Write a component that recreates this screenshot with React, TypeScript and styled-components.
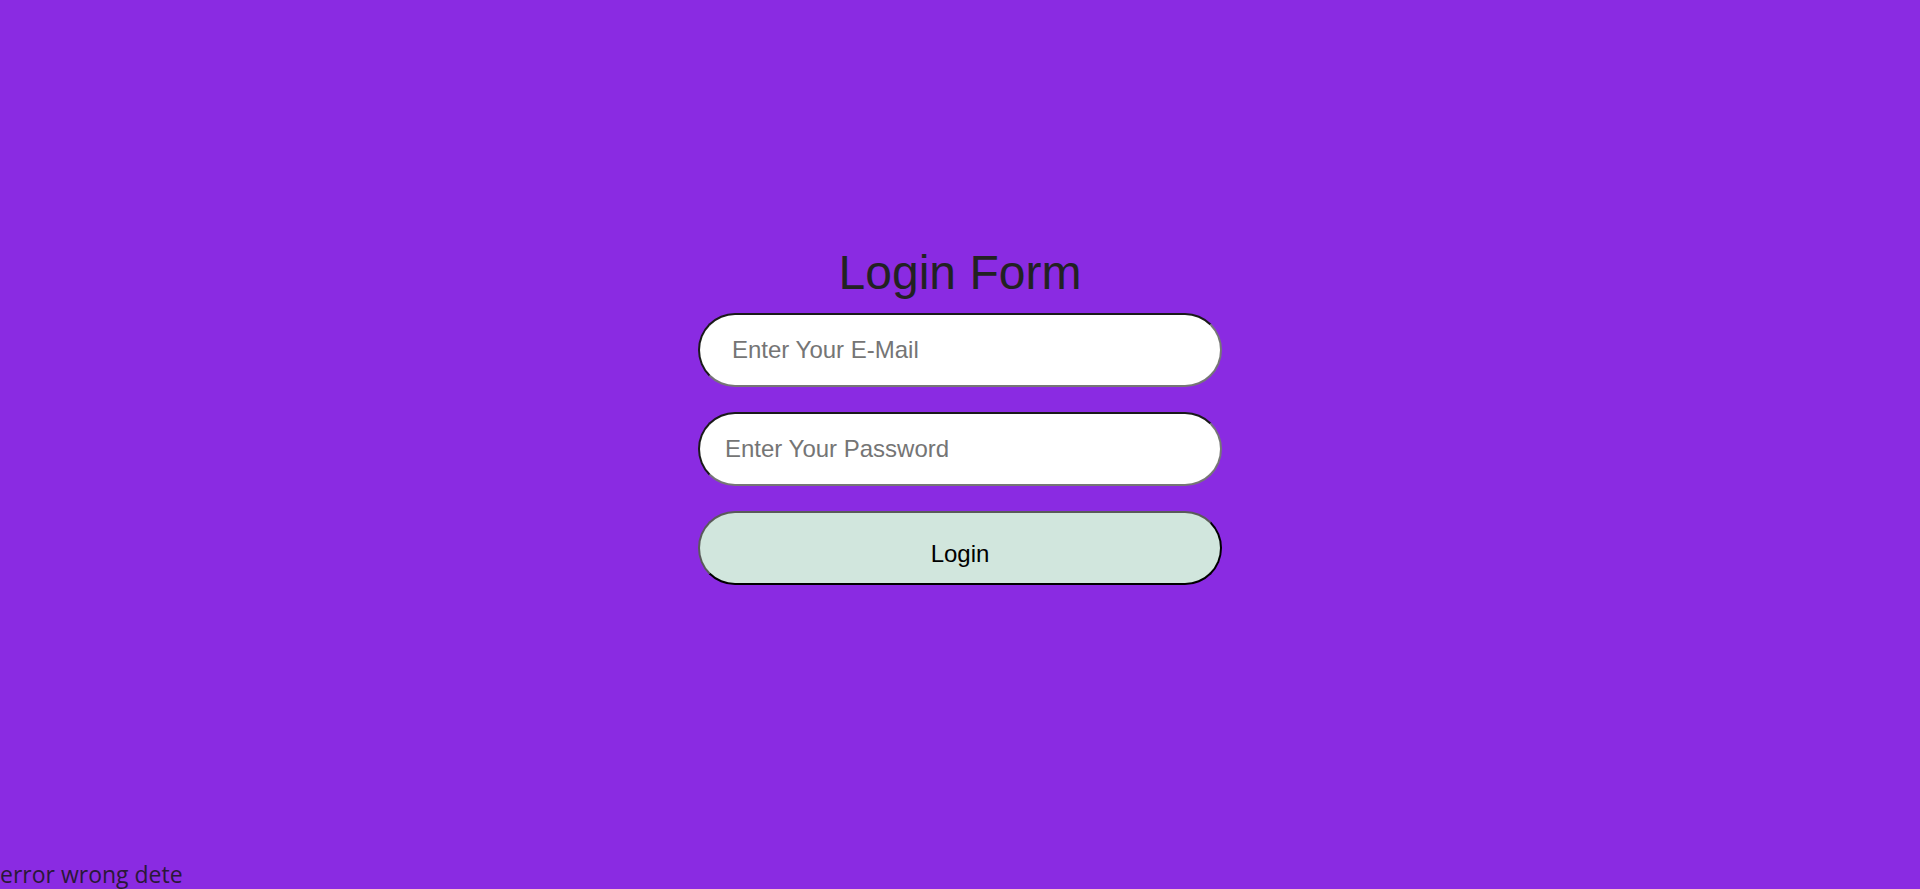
import React from 'react'
import styled, { createGlobalStyle } from 'styled-components'

const GlobalStyle = createGlobalStyle`
  html, body {
    margin: 0;
    padding: 0;
  }
  body {
    background: #8a2be2;
    font-family: "Liberation Sans", Arial, sans-serif;
  }
`

const Page = styled.div`
  min-height: 100vh;
  display: flex;
  flex-direction: column;
`

const Main = styled.main`
  flex: 1;
  display: flex;
  flex-direction: column;
  align-items: center;
  padding-top: 245px;
`

const Title = styled.h1`
  margin: 0 0 13px;
  font-size: 48px;
  font-weight: 400;
  line-height: normal;
  color: #222;
`

const Form = styled.form`
  display: flex;
  flex-direction: column;
  gap: 25px;
  width: 524px;
`

const Field = styled.input<{ $indent: number }>`
  box-sizing: border-box;
  width: 100%;
  height: 74px;
  padding: 0 0 0 ${(p) => p.$indent}px;
  border: 2px solid;
  border-color: #1a1a1a #767676 #767676 #1a1a1a;
  border-radius: 40px;
  background: #fff;
  font-family: "Liberation Sans", Arial, sans-serif;
  font-size: 24px;
  color: #222;
  outline: none;

  &::placeholder {
    color: #757575;
  }
`

const Submit = styled.button`
  box-sizing: border-box;
  width: 100%;
  height: 74px;
  padding: 12px 0 0;
  border: 2px solid;
  border-color: #5a5a5a #000 #000 #5a5a5a;
  border-radius: 40px;
  background: #d1e6dd;
  font-family: "Liberation Sans", Arial, sans-serif;
  font-size: 24px;
  color: #000;
  cursor: pointer;
`

const ErrorText = styled.div`
  font-family: "Open Sans", sans-serif;
  font-size: 23px;
  line-height: 30px;
  color: #2a1838;
`

const App: React.FC = () => {
  return (
    <Page>
      <GlobalStyle />
      <Main>
        <Title>Login Form</Title>
        <Form onSubmit={(e) => e.preventDefault()}>
          <Field type="email" placeholder="Enter Your E-Mail" $indent={32} />
          <Field type="password" placeholder="Enter Your Password" $indent={25} />
          <Submit type="submit">Login</Submit>
        </Form>
      </Main>
      <ErrorText>error wrong dete</ErrorText>
    </Page>
  )
}

export default App
